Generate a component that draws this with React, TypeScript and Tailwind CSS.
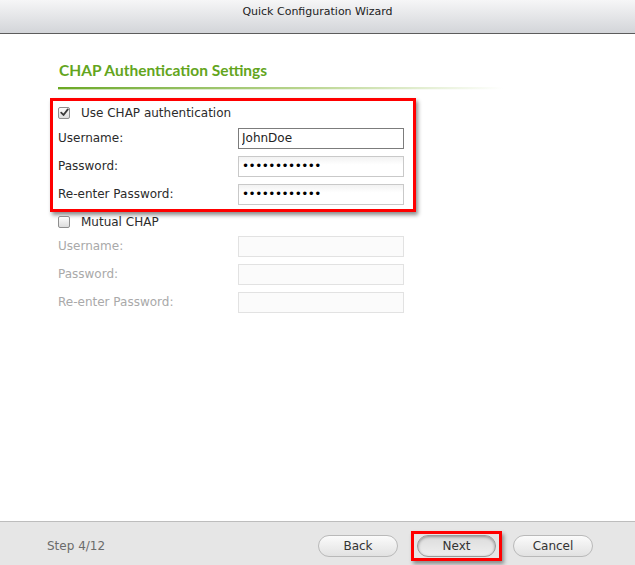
import React from 'react';

const font = { fontFamily: '"DejaVu Sans", Verdana, sans-serif' };

const Checkbox = ({ checked }: { checked?: boolean }) => (
  <span className="w-[12px] h-[12px] rounded-[2px] border border-[#8e8e8e] bg-gradient-to-b from-[#fdfdfd] to-[#dcdcdc] flex items-center justify-center shrink-0">
    {checked && (
      <svg width="9" height="9" viewBox="0 0 9 9">
        <path d="M1.2 4.6 L3.5 7 L7.8 1.4" fill="none" stroke="#3a3a3a" strokeWidth="1.8" strokeLinecap="round" strokeLinejoin="round" />
      </svg>
    )}
  </span>
);

const Field = ({ label, value, type = 'text', disabled, focused }: { label: string; value?: string; type?: string; disabled?: boolean; focused?: boolean }) => (
  <div className="h-[28px] flex items-center">
    <span className={`w-[180px] text-[12px] ${disabled ? 'text-[#a9a9a9]' : 'text-[#2b2b2b]'}`}>{label}</span>
    <input
      readOnly
      type={type}
      value={value ?? ''}
      disabled={disabled}
      className={`w-[166px] h-[21px] px-[3px] text-[12px] outline-none ${type === 'password' ? 'tracking-[-0.5px]' : ''} ${
        disabled
          ? 'border border-[#e2e2e2] bg-[#fbfbfb]'
          : focused
          ? 'border border-[#7c7c7c] bg-white text-[#222]'
          : 'border border-[#c9c9c9] bg-gradient-to-b from-[#f2f2f2] to-white to-[40%] text-black'
      }`}
      style={font}
    />
  </div>
);

export default function App() {
  return (
    <div className="w-[635px] h-[565px] bg-white flex flex-col overflow-hidden" style={font}>
      {/* Title bar */}
      <div className="h-[34px] shrink-0 bg-gradient-to-b from-[#f6f6f7] to-[#d3d5d9] border-b border-[#5c5c5c] flex items-center justify-center">
        <span className="text-[11px] text-[#222] -mt-[9px]">Quick Configuration Wizard</span>
      </div>

      {/* Content */}
      <div className="flex-1 pt-[26px]">
        <div className="pl-[59px]">
          <h2 className="text-[15.5px] leading-[20px] font-bold text-[#63a51d]" style={{ fontFamily: 'Lato, sans-serif' }}>
            CHAP Authentication Settings
          </h2>
          <div className="-ml-px mt-[7px] w-[445px] h-[2px] bg-gradient-to-r from-[#6aa820] via-[#b9d58e] via-[55%] to-transparent" />
          <div className="-ml-px w-[445px] h-[1px] bg-gradient-to-r from-[#c9ddb0] via-[#e8efe0] to-transparent" />
        </div>

        <div className="mt-[8px] ml-[50px] w-[366px] border-[3px] border-[#ff0000] pl-[5px] pb-[1px] shadow-[2px_3px_4px_rgba(0,0,0,0.45)]">
          <div className="h-[23px] flex items-center gap-[11px] text-[12px] text-[#2b2b2b]">
            <Checkbox checked />
            <span>Use CHAP authentication</span>
          </div>
          <Field label="Username:" value="JohnDoe" focused />
          <Field label="Password:" value="************" type="password" />
          <Field label="Re-enter Password:" value="************" type="password" />
        </div>

        <div className="pl-[58px]">
          <div className="h-[20px] flex items-center gap-[11px] text-[12px] text-[#2b2b2b]">
            <Checkbox />
            <span>Mutual CHAP</span>
          </div>
          <Field label="Username:" disabled />
          <Field label="Password:" disabled />
          <Field label="Re-enter Password:" disabled />
        </div>
      </div>

      {/* Footer */}
      <div className="h-[44px] shrink-0 border-t border-[#bdbdbd] bg-[#e6e6e6] flex items-center pt-[5px] pl-[47px] pr-[42px]">
        <span className="text-[12px] text-[#6b6b6b]">Step 4/12</span>
        <div className="ml-auto flex items-center">
          <button className="w-[80px] h-[22px] rounded-full border border-[#b9b9b9] bg-gradient-to-b from-[#fbfbfb] to-[#e2e2e2] text-[12px] text-[#333]">Back</button>
          <div className="ml-[13px] border-[3px] border-[#ff0000] px-[3px] py-[1px] shadow-[2px_3px_4px_rgba(0,0,0,0.4)]">
            <button className="block w-[79px] h-[22px] rounded-full border border-[#9a9a9a] bg-gradient-to-b from-[#dcdcdc] to-[#efefef] shadow-[inset_0_1px_3px_rgba(0,0,0,0.35)] text-[12px] text-[#333]">Next</button>
          </div>
          <button className="ml-[11px] w-[80px] h-[22px] rounded-full border border-[#b9b9b9] bg-gradient-to-b from-[#fbfbfb] to-[#e2e2e2] text-[12px] text-[#333]">Cancel</button>
        </div>
      </div>
    </div>
  );
}
